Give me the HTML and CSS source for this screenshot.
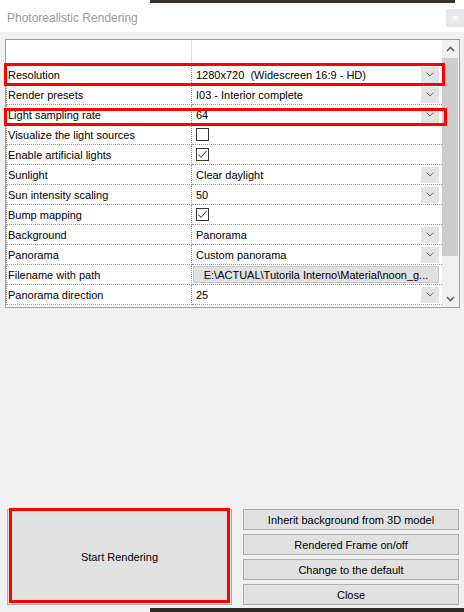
FILE: index.html
```html
<!DOCTYPE html>
<html>
<head>
<meta charset="utf-8">
<link rel="stylesheet" href="styles.css">
</head>
<body>
<div class="screen">
  <div class="strip"><div class="band"></div></div>
  <div class="titlebar">
    <span class="title">Photorealistic Rendering</span>
    <div class="closebtn">×</div>
  </div>
  <div class="main">
    <div class="grid">
      <div class="table">
        <div class="hdr"><div class="hl"></div><div class="hv"></div></div>
        <div class="row"><div class="lbl">Resolution</div><div class="val"><span>1280x720&nbsp; (Widescreen 16:9 - HD)</span><span class="dd"><svg width="8" height="5" viewBox="0 0 8 5"><path d="M0.5 0.5 L4 4 L7.5 0.5" stroke="#707070" fill="none"/></svg></span></div></div>
        <div class="row"><div class="lbl">Render presets</div><div class="val"><span>I03 - Interior complete</span><span class="dd"><svg width="8" height="5" viewBox="0 0 8 5"><path d="M0.5 0.5 L4 4 L7.5 0.5" stroke="#707070" fill="none"/></svg></span></div></div>
        <div class="row"><div class="lbl">Light sampling rate</div><div class="val"><span>64</span><span class="dd"><svg width="8" height="5" viewBox="0 0 8 5"><path d="M0.5 0.5 L4 4 L7.5 0.5" stroke="#707070" fill="none"/></svg></span></div></div>
        <div class="row"><div class="lbl">Visualize the light sources</div><div class="val"><span class="cb"></span></div></div>
        <div class="row"><div class="lbl">Enable artificial lights</div><div class="val"><span class="cb"><svg width="11" height="11" viewBox="0 0 11 11"><path d="M1.5 5.5 L4 8.5 L9.5 2" stroke="#333" fill="none"/></svg></span></div></div>
        <div class="row"><div class="lbl">Sunlight</div><div class="val"><span>Clear daylight</span><span class="dd"><svg width="8" height="5" viewBox="0 0 8 5"><path d="M0.5 0.5 L4 4 L7.5 0.5" stroke="#707070" fill="none"/></svg></span></div></div>
        <div class="row"><div class="lbl">Sun intensity scaling</div><div class="val"><span>50</span><span class="dd"><svg width="8" height="5" viewBox="0 0 8 5"><path d="M0.5 0.5 L4 4 L7.5 0.5" stroke="#707070" fill="none"/></svg></span></div></div>
        <div class="row"><div class="lbl">Bump mapping</div><div class="val"><span class="cb"><svg width="11" height="11" viewBox="0 0 11 11"><path d="M1.5 5.5 L4 8.5 L9.5 2" stroke="#333" fill="none"/></svg></span></div></div>
        <div class="row"><div class="lbl">Background</div><div class="val"><span>Panorama</span><span class="dd"><svg width="8" height="5" viewBox="0 0 8 5"><path d="M0.5 0.5 L4 4 L7.5 0.5" stroke="#707070" fill="none"/></svg></span></div></div>
        <div class="row"><div class="lbl">Panorama</div><div class="val"><span>Custom panorama</span><span class="dd"><svg width="8" height="5" viewBox="0 0 8 5"><path d="M0.5 0.5 L4 4 L7.5 0.5" stroke="#707070" fill="none"/></svg></span></div></div>
        <div class="row"><div class="lbl">Filename with path</div><div class="val fileval"><span class="filebtn">E:\ACTUAL\Tutorila Interno\Material\noon_g...</span></div></div>
        <div class="row"><div class="lbl">Panorama direction</div><div class="val"><span>25</span><span class="dd"><svg width="8" height="5" viewBox="0 0 8 5"><path d="M0.5 0.5 L4 4 L7.5 0.5" stroke="#707070" fill="none"/></svg></span></div></div>
      </div>
      <div class="sb">
        <div class="sbbtn"><svg width="9" height="6" viewBox="0 0 9 6"><path d="M1 5 L4.5 1.5 L8 5" stroke="#606060" stroke-width="1.6" fill="none"/></svg></div>
        <div class="track"><div class="thumb"></div></div>
        <div class="sbbtn"><svg width="9" height="6" viewBox="0 0 9 6"><path d="M1 1 L4.5 4.5 L8 1" stroke="#606060" stroke-width="1.6" fill="none"/></svg></div>
      </div>
    </div>
    <div class="buttons">
      <div class="btn big">Start Rendering</div>
      <div class="stack">
        <div class="btn">Inherit background from 3D model</div>
        <div class="btn">Rendered Frame on/off</div>
        <div class="btn">Change to the default</div>
        <div class="btn">Close</div>
      </div>
    </div>
  </div>
  <div class="strip bottom"><div class="band"></div></div>
  <div class="mark mark-res"></div>
  <div class="mark mark-light"></div>
  <div class="mark mark-start"></div>
</div>
</body>
</html>
```
FILE: styles.css
```css
html, body {
  margin: 0;
  padding: 0;
}
body {
  background: #f0f0f0;
  font-family: "Liberation Sans", Arial, sans-serif;
  font-size: 11px;
  color: #000;
}
.screen {
  width: 464px;
  height: 612px;
  position: relative;
  overflow: hidden;
  display: flex;
  flex-direction: column;
}
.strip {
  height: 3px;
  background: #fff;
  display: flex;
  flex-shrink: 0;
}
.strip .band {
  margin-left: 150px;
  width: 305px;
  background: #3b3128;
}
.strip.bottom {
  margin-top: auto;
  height: 4px;
  background: #f0f0f0;
}
.strip.bottom .band {
  width: 314px;
  background: #2e2a26;
}
.titlebar {
  height: 29px;
  background: #fff;
  display: flex;
  align-items: center;
  justify-content: space-between;
  padding-left: 7px;
  flex-shrink: 0;
}
.title {
  font-size: 12px;
  color: #9a9a9a;
}
.closebtn {
  width: 18px;
  height: 18px;
  background: #e8e8e8;
  color: #fafafa;
  font-size: 14px;
  line-height: 18px;
  text-align: center;
}
.main {
  padding: 7px 0 0 5px;
}
.grid {
  width: 455px;
  height: 269px;
  box-sizing: border-box;
  border: 1px solid #a0a0a0;
  background: #fff;
  display: flex;
}
.table {
  width: 436px;
}
.hdr {
  height: 25px;
  display: flex;
}
.hl {
  width: 185px;
  border-right: 1px solid #e2e2e2;
}
.row {
  height: 20px;
  display: flex;
}
.lbl {
  width: 186px;
  box-sizing: border-box;
  border-left: 1px dotted #9a9a9a;
  border-right: 1px dotted #9a9a9a;
  border-bottom: 1px dotted #9a9a9a;
  padding-left: 1px;
  display: flex;
  align-items: center;
  white-space: nowrap;
}
.val {
  flex: 1;
  box-sizing: border-box;
  border-bottom: 1px dotted #9a9a9a;
  padding-left: 4px;
  display: flex;
  align-items: center;
  white-space: nowrap;
}
.dd {
  margin-left: auto;
  margin-right: 3px;
  width: 18px;
  height: 16px;
  background: #e3e3e3;
  display: flex;
  align-items: center;
  justify-content: center;
}
.cb {
  width: 13px;
  height: 13px;
  box-sizing: border-box;
  border: 1px solid #333;
  background: #fff;
  display: flex;
  align-items: center;
  justify-content: center;
}
.fileval {
  padding-left: 1px;
}
.filebtn {
  width: 246px;
  height: 17px;
  box-sizing: border-box;
  background: #e1e1e1;
  border: 1px solid #c8c8c8;
  display: flex;
  align-items: center;
  justify-content: center;
}
.sb {
  width: 17px;
  background: #f0f0f0;
  display: flex;
  flex-direction: column;
}
.sbbtn {
  height: 17px;
  display: flex;
  align-items: center;
  justify-content: center;
}
.track {
  flex: 1;
}
.thumb {
  margin: 1px 1px 0 0;
  height: 198px;
  background: #cdcdcd;
}
.buttons {
  margin-top: 201px;
  padding-left: 2px;
  display: flex;
  gap: 11px;
}
.btn {
  box-sizing: border-box;
  background: #e1e1e1;
  border: 1px solid #adadad;
  display: flex;
  align-items: center;
  justify-content: center;
  height: 21px;
}
.big {
  width: 225px;
  height: 96px;
}
.stack {
  width: 216px;
  display: flex;
  flex-direction: column;
  gap: 4px;
}
.mark {
  position: absolute;
  box-sizing: border-box;
  border: 3px solid #ff0000;
}
.mark-res {
  left: 4px;
  top: 63px;
  width: 441px;
  height: 23px;
}
.mark-light {
  left: 4px;
  top: 108px;
  width: 443px;
  height: 18px;
}
.mark-start {
  left: 9px;
  top: 508px;
  width: 221px;
  height: 95px;
}
```
